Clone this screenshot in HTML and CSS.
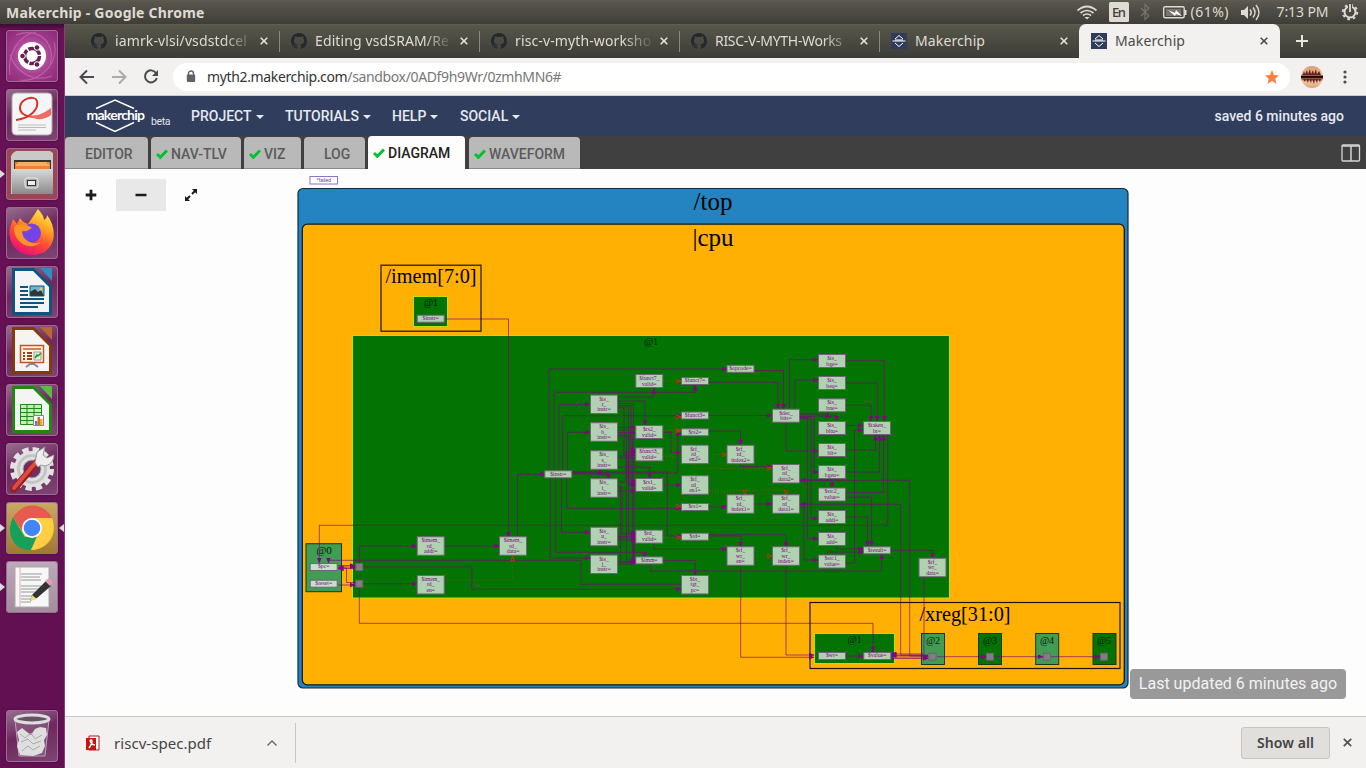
FILE: index.html
```html
<!DOCTYPE html>
<html lang="en">
<head>
<meta charset="utf-8">
<title>Makerchip</title>
<link rel="stylesheet" href="styles.css">
</head>
<body>
<svg width="0" height="0" class="defs">
  <defs>
    <symbol id="octocat" viewBox="0 0 16 16"><path fill="#24292e" d="M8 0C3.58 0 0 3.58 0 8c0 3.54 2.29 6.53 5.47 7.59.4.07.55-.17.55-.38 0-.19-.01-.82-.01-1.49-2.01.37-2.53-.49-2.69-.94-.09-.23-.48-.94-.82-1.13-.28-.15-.68-.52-.01-.53.63-.01 1.08.58 1.23.82.72 1.21 1.87.87 2.33.66.07-.52.28-.87.51-1.07-1.78-.2-3.64-.89-3.64-3.95 0-.87.31-1.59.82-2.15-.08-.2-.36-1.02.08-2.12 0 0 .67-.21 2.2.82a7.6 7.6 0 0 1 4 0c1.53-1.04 2.2-.82 2.2-.82.44 1.1.16 1.92.08 2.12.51.56.82 1.27.82 2.15 0 3.07-1.87 3.75-3.65 3.95.29.25.54.73.54 1.48 0 1.07-.01 1.93-.01 2.2 0 .21.15.46.55.38A8 8 0 0 0 16 8c0-4.42-3.58-8-8-8z"/></symbol>
    <symbol id="chip" viewBox="0 0 16 16"><path fill="#2f3c5c" d="M0 0h16v16H0z"/><path d="M4 6l4-3.500 4 3.500M4 10l4 3.500 4-3.500M1.500 8h13M4 7h8" fill="none" stroke="#fff" stroke-width="1"/></symbol>
    <symbol id="check" viewBox="0 0 12 10"><path d="M1 5l3.300 3.300L11 1.500" fill="none" stroke="#00c22d" stroke-width="3"/></symbol>
    <symbol id="x" viewBox="0 0 8 8"><path d="M.7.7l6.600 6.600M7.300.7L.7 7.300" fill="none" stroke="currentColor" stroke-width="1.600"/></symbol>
    <linearGradient id="fox" x1=".8" y1="0" x2=".3" y2="1"><stop offset="0" stop-color="#fff04a"/><stop offset=".35" stop-color="#ffa023"/><stop offset=".65" stop-color="#ff4636"/><stop offset="1" stop-color="#e80b80"/></linearGradient>
    <linearGradient id="metal" x1="0" y1="0" x2="0" y2="1"><stop offset="0" stop-color="#d8d8d8"/><stop offset="1" stop-color="#8b8b8b"/></linearGradient>
    <linearGradient id="sunset" x1="0" y1="0" x2="0" y2="1"><stop offset="0" stop-color="#d89a73"/><stop offset=".4" stop-color="#f0c6a0"/><stop offset=".5" stop-color="#5a1710"/><stop offset=".7" stop-color="#f3c3a1"/><stop offset="1" stop-color="#dfa474"/></linearGradient>
  </defs>
</svg>

<header class="panel">
  <span class="panel-title">Makerchip - Google Chrome</span>
  <svg class="tray" width="290" height="24" viewBox="1076 0 290 24" fill="none" stroke="#dfdbd2">
    <path d="M1077.500 10.500q9.500-8 19 0M1080.500 13q6.500-5 13 0M1083 15.500q4-3 8 0" stroke-width="1.700"/><path d="M1084.500 17h5l-2.500 2.500z" fill="#dfdbd2" stroke="none"/>
    <rect x="1109" y="2" width="20" height="20" rx="1.500" fill="#dfdbd2" stroke="none"/><text x="1112" y="17" class="lang" textLength="14">En</text>
    <path d="M1141 8l8 8-4 3.500v-15l4 3.500-8 8" stroke="#77756d" stroke-width="1.200"/>
    <rect x="1163.700" y="6.700" width="20.500" height="11" rx="1.500" stroke-width="1.400"/><path d="M1166 9h15v7h-15z" fill="#77756d" stroke="none"/><path d="M1185.500 10v5" stroke-width="2"/><path d="M1168 10l7 3 1-3 6 6-6-2-1 2z" fill="#fff" stroke="none"/>
    <text x="1190.500" y="17" class="tray-text" textLength="38">(61%)</text>
    <path d="M1241 10h3l4-4v13l-4-4h-3z" fill="#dfdbd2" stroke="none"/><path d="M1250 9.500q2.500 3 0 6M1253 7.500q4 5 0 10M1256 5q6 7.500 0 15" stroke-width="1.500"/>
    <text x="1276.500" y="17" class="tray-text" textLength="52">7:13 PM</text>
    <circle cx="1350" cy="12" r="5.500" stroke-width="2"/><circle cx="1350" cy="12" r="7.200" stroke-width="2" stroke-dasharray="2.600 3.055"/><path d="M1350 3v9" stroke="#4c4a44" stroke-width="4"/><path d="M1350 4v8" stroke-width="1.800"/>
  </svg>
</header>

<div class="desk">
<nav class="launcher">
  <div class="tile dash"><svg viewBox="0 0 52 52"><path d="M4 45C1 25 12 5 30 2M48 12C54 32 34 53 14 50M10 5C34-4 52 15 43 38M4 25C10 42 27 53 46 46" fill="none" stroke="#d786c2" stroke-opacity=".5" stroke-width="1.200"/><circle cx="26" cy="26" r="14" fill="#fff"/><circle cx="26" cy="26" r="7.500" fill="none" stroke="#672052" stroke-width="3.500" stroke-dasharray="14.200 1.500"/><g fill="#672052" stroke="#fff"><circle cx="16.500" cy="26" r="2.800"/><circle cx="31" cy="17.500" r="2.800"/><circle cx="31" cy="34.500" r="2.800"/></g></svg></div>
  <div class="tile"><svg viewBox="0 0 52 52"><rect x="6" y="4" width="40" height="42" rx="4" fill="#f5f5f5" stroke="#aaa"/><path d="M10 31C25 29 33 20 31 12 29 6 15 9 14 18c-1 11 18 13 31 5" fill="none" stroke="#d8302b" stroke-width="2"/><path d="M22 26c9 2 16-2 23-7v7c-6 5-15 6-23 0z" fill="#ec6b63"/><path d="M12 36h28M12 38.500h28M12 41h18" stroke="#bbb"/></svg></div>
  <div class="tile files running"><svg viewBox="0 0 52 52"><path d="M7 5l3-2h34l3 2v41H5V8z" fill="#c9c9c9"/><path d="M8 12h37v11H8z" fill="#343434"/><path d="M9 14h35v7H9z" fill="#e88532"/><path d="M10 17h33M12 15h29" stroke="#ffd6a0"/><path d="M6 21h41v25H6z" fill="url(#metal)"/><rect x="19" y="30" width="13" height="10" rx="2" fill="#aaa" stroke="#eee"/><rect x="21.500" y="32.500" width="8" height="5" fill="#eee" stroke="#333"/></svg></div>
  <div class="tile"><svg viewBox="0 0 52 52"><path d="M32 2c3 4 6 7 6 11 2-1 3-3 3-5 13 17 7 40-15 40C6 48 0 28 5 18l2-6 4 5 3-6c2 3 4 5 8 6z" fill="url(#fox)"/><circle cx="25.500" cy="26" r="9.500" fill="#7542e5"/><path d="M8 20c5-4 13-3 18 1-4 2-5 4-10 3 0 9 10 15 19 11-10 10-28 1-27-15z" fill="#ff9427"/></svg></div>
  <div class="tile"><svg viewBox="0 0 52 52"><path d="M6 2h22l18 18v29H6z" fill="#0b5580"/><path d="M9 5h18l16 16v25H9z" fill="#f4f4f4"/><path d="M34 2h12v13z" fill="#2f8fc5"/><path d="M14 21h8M14 25h8M14 29h8M14 33h24M14 37h24M14 41h18" stroke="#0b5580" stroke-width="2"/><path d="M24 20h14v10H24z" fill="#67b8dd"/><path d="M24 30v-4l5-3 3 3 3-2 3 6z" fill="#333"/><circle cx="35" cy="23" r="1.500" fill="#fac939"/><path d="M24 20h14v10H24z" fill="none" stroke="#0b5580"/></svg></div>
  <div class="tile"><svg viewBox="0 0 52 52"><path d="M6 2h22l18 18v29H6z" fill="#843a0d"/><path d="M9 5h18l16 16v25H9z" fill="#f4f4f4"/><path d="M34 2h12v13z" fill="#bd6630"/><path d="M14.500 20.500h23v17h-23z" fill="#fff2e8" stroke="#be581f" stroke-width="1.500"/><path d="M17 24h18" stroke="#d7824b" stroke-width="2"/><path d="M17 28h2m2 0h5m-9 3h2m2 0h5m-9 3h2m2 0h5" stroke="#9b4115" stroke-width="2"/><path d="M28 27h7v8h-7z" fill="#e5f4db" stroke="#999"/><path d="M29 33l2-3 1 1 3-3" stroke="#249532" fill="none" stroke-width="1.500"/><path d="M20 42l4-3h4l4 3" fill="none" stroke="#888" stroke-width="2"/></svg></div>
  <div class="tile"><svg viewBox="0 0 52 52"><path d="M6 2h22l18 18v29H6z" fill="#20870f"/><path d="M9 5h18l16 16v25H9z" fill="#f4f4f4"/><path d="M34 2h12v13z" fill="#58bd3e"/><path d="M14.500 20.500h21v20h-21z" fill="#c4efaf"/><path d="M14.500 20.500h21v20h-21zM14 24.500h21M14 28.500h21M14 32.500h21M14 36.500h21M21 20v20M28 20v20" stroke="#23861a" fill="none"/><path d="M27.500 31.500h10v10h-10z" fill="#fff" stroke="#888"/><path d="M29 37h2.500v4H29z" fill="#3d88d0"/><path d="M31.500 33H34v8h-2.500z" fill="#de6825"/><path d="M34 35h2.500v6H34z" fill="#ebac27"/></svg></div>
  <div class="tile"><svg viewBox="0 0 52 52"><circle cx="26" cy="26" r="13.500" fill="none" stroke="#e2e2e2" stroke-width="9"/><circle cx="26" cy="26" r="19.500" fill="none" stroke="#e2e2e2" stroke-width="5" stroke-dasharray="6.200 4.010"/><circle cx="26" cy="26" r="9" fill="none" stroke="#aaa"/><circle cx="26" cy="26" r="13.500" fill="none" stroke="#c4c4c4" stroke-width="3"/><path d="M8 46l23-27" stroke="#971e1c" stroke-width="7" stroke-linecap="round"/><path d="M8 45l23-27" stroke="#df4a42" stroke-width="4" stroke-linecap="round"/><path d="M29 20l2-11 8-5-2 8 4 3 7-3c0 8-8 13-13 10l-3 2z" fill="#eee" stroke="#999"/></svg></div>
  <div class="tile chrome running focused"><svg viewBox="0 0 52 52"><circle cx="26" cy="26" r="22" fill="#f5c536"/><path d="M7 15C17-1 38 0 46 16H26l-10 13z" fill="#e55b4f"/><path d="M7 15l12 20 12-1-6 14C7 49-1 30 7 15z" fill="#17a05c"/><path d="M26 16h20c5 16-5 31-21 32l10-19z" fill="#ffce43"/><circle cx="26" cy="26" r="10" fill="#fff"/><circle cx="26" cy="26" r="8.300" fill="#4285f4"/></svg></div>
  <div class="tile editor running"><svg viewBox="0 0 52 52"><path d="M9 6h34v40H9z" fill="#f7f7f7" stroke="#aaa"/><path d="M14 6v40" stroke="#e4aeb1"/><path d="M15 13h21M15 16h19M15 19h20M15 25h20M15 28h20M15 31h14M15 35h15M15 38h12M15 41h10" stroke="#999"/><path d="M24 40l2-6 14-14 5 5-14 12z" fill="#333"/><path d="M24 40l2-6 5 4z" fill="#edda79"/><path d="M39 20l4-3 4 4-3 4z" fill="#e49bbb"/></svg></div>
  <div class="tile trash"><svg viewBox="0 0 52 52"><path d="M9 10h34l-4 36H13z" fill="#8d5f86" fill-opacity=".65" stroke="#b9a3b5"/><ellipse cx="26" cy="9" rx="17" ry="4" fill="#665165" stroke="#ddd" stroke-width="3"/><path d="M11 22l5-4 5 4 4 3 4-6 5-2 6 1 1 7-3 5 1 6-3 7-9 3-13-1-3-9 2-6z" fill="#dedede"/><path d="M14 24l5 4 6-5 4 6 7-4M15 32l7-3 5 5 8-3M16 41l6-5 5 4 7-4" stroke="#aaa" fill="none"/></svg></div>
</nav>

<main class="window">
  <div class="tabs">
    <div class="tab"><svg class="fav"><use href="#octocat"/></svg><span class="label fade">iamrk-vlsi/vsdstdcel</span><svg class="close"><use href="#x"/></svg></div>
    <div class="tab"><svg class="fav"><use href="#octocat"/></svg><span class="label fade">Editing vsdSRAM/Re</span><svg class="close"><use href="#x"/></svg></div>
    <div class="tab"><svg class="fav"><use href="#octocat"/></svg><span class="label fade">risc-v-myth-worksho</span><svg class="close"><use href="#x"/></svg></div>
    <div class="tab"><svg class="fav"><use href="#octocat"/></svg><span class="label fade caps">RISC-V-MYTH-Works</span><svg class="close"><use href="#x"/></svg></div>
    <div class="tab last"><svg class="fav"><use href="#chip"/></svg><span class="label">Makerchip</span><svg class="close"><use href="#x"/></svg></div>
    <div class="tab active"><svg class="fav"><use href="#chip"/></svg><span class="label">Makerchip</span><svg class="close"><use href="#x"/></svg></div>
    <svg class="plus" viewBox="0 0 12 12"><path d="M6 0v12M0 6h12" stroke="#e8e6df" stroke-width="2"/></svg>
  </div>
  <div class="toolbar">
    <svg class="history" width="100" height="24" viewBox="76 64 100 24" fill="none" stroke="#4a4b4d" stroke-width="2"><path d="M94 76H81M87 69.500L80.500 76l6.500 6.500"/><path d="M112 76h13M119 69.500l6.500 6.500-6.500 6.500" stroke="#aaa"/><path d="M156 72a6 6 0 1 0 .8 5"/><path d="M158 69v6h-6z" fill="#4a4b4d" stroke="none"/></svg>
    <div class="omnibox">
      <svg width="10" height="13" viewBox="0 0 10 13"><path d="M2.500 6V3.500a2.500 2.500 0 0 1 5 0V6" fill="none" stroke="#5f6368" stroke-width="1.400"/><rect x=".8" y="4.500" width="8.400" height="7.500" rx="1" fill="#5f6368"/></svg>
      <span class="url">myth2.makerchip.com<span>/sandbox/0ADf9h9Wr/0zmhMN6#</span></span>
      <svg class="star" width="16" height="16" viewBox="0 0 16 16"><path d="M8 1l2 5 5 .4-3.800 3.300L12.500 15 8 12l-4.500 3 1.300-5.300L1 6.400 6 6z" fill="#f58142"/></svg>
    </div>
    <svg class="avatar" width="22" height="22" viewBox="0 0 22 22"><circle cx="11" cy="11" r="11" fill="url(#sunset)"/><path d="M2 8l1-3 1 3 2-4 1 4 2-5 1 5 2-4 1 4 2-5 1 5 2-3 2 4H1zM2 13l2 3 1-3 2 4 1-4 2 4 1-4 2 5 1-5 2 4 1-4 2 3 1-3z" fill="#6c2019"/><path d="M0 10.700h22" stroke="#160807" stroke-width="2"/></svg>
    <svg class="dots" width="4" height="14" viewBox="0 0 4 14" fill="#4a4b4d"><circle cx="2" cy="2" r="1.600"/><circle cx="2" cy="7" r="1.600"/><circle cx="2" cy="12" r="1.600"/></svg>
  </div>
  <div class="navbar">
    <svg class="brand" width="100" height="40" viewBox="80 96 100 40"><path d="M96 108.500l19-8.500 19 8.500M96 122.500l19 9 19-9" fill="none" stroke="#fff" stroke-width="1.500"/><text x="86.500" y="120" textLength="58.500" class="brand-name">makerchip</text><text x="151" y="125" textLength="19.500" class="beta">beta</text></svg>
    <span class="menu m1">PROJECT</span><span class="menu m2">TUTORIALS</span><span class="menu m3">HELP</span><span class="menu m4">SOCIAL</span>
    <span class="saved">saved 6 minutes ago</span>
  </div>
  <div class="panes">
    <div class="pane w1">EDITOR</div>
    <div class="pane w2 ok"><svg><use href="#check"/></svg>NAV-TLV</div>
    <div class="pane w3 ok"><svg><use href="#check"/></svg>VIZ</div>
    <div class="pane w4">LOG</div>
    <div class="pane w5 ok current"><svg><use href="#check"/></svg>DIAGRAM</div>
    <div class="pane w6 ok"><svg><use href="#check"/></svg>WAVEFORM</div>
    <svg class="split" width="20" height="18" viewBox="0 0 20 18"><rect x="1" y="1" width="17.500" height="16" rx="1" fill="none" stroke="#d4d4d4" stroke-width="1.300"/><path d="M1 2h17.500M10 2v15" stroke="#d4d4d4" stroke-width="1.500"/></svg>
  </div>
  <section class="view">
    <svg id="diagram" width="1301" height="547" viewBox="65 169 1301 547">
      <defs>
        <marker id="head" viewBox="0 0 6 5" refX="5.500" refY="2.500" markerWidth="6" markerHeight="5" orient="auto" markerUnits="userSpaceOnUse"><path d="M0 0l6 2.500-6 2.500z" fill="#870087"/></marker>
        <marker id="open" viewBox="0 0 6 5" refX="5.500" refY="2.500" markerWidth="6" markerHeight="5" orient="auto" markerUnits="userSpaceOnUse"><path d="M.5.5l5 2-5 2z" fill="none" stroke="#c03800"/></marker>
      </defs>
      <rect x="310" y="176.500" width="27.500" height="7.500" fill="#fff" stroke="#8e74c4"/><text x="324" y="181.500" class="sig failed">*failed</text>
      <rect x="298" y="188.500" width="830" height="499.500" rx="5" fill="#2384c1" stroke="#152b38" stroke-width="1.200"/>
      <rect x="302.300" y="224.200" width="822" height="460.600" rx="5" fill="#ffb003" stroke="#1c1710" stroke-width="1.300"/>
      <text x="713" y="210" class="scope big">/top</text><text x="713" y="246" class="scope big">|cpu</text>
      <g fill="none" stroke="#1d1400" stroke-width="1.200"><rect x="381" y="265.200" width="100" height="66"/><rect x="810" y="602.500" width="310" height="66"/></g>
      <g fill="#037303" stroke="#bfe000"><rect x="413.500" y="296.500" width="34" height="30"/><rect x="352.500" y="335.500" width="597" height="262.500"/><rect x="814.500" y="633.500" width="80" height="30"/></g>
      <g stroke="#183818" fill="#409d53"><rect x="306" y="543.700" width="35.500" height="48"/><rect x="921.500" y="633.500" width="23" height="31"/><rect x="1035.700" y="633.500" width="23" height="31"/><rect x="978.500" y="633.500" width="23" height="31" fill="#037303"/><rect x="1093" y="633.500" width="23" height="31" fill="#037303"/></g>
      <text x="431" y="283" class="scope mid">/imem[7:0]</text><text x="965" y="621" class="scope mid">/xreg[31:0]</text>
      <g class="stage"><text x="431" y="306">@1</text><text x="651" y="345">@1</text><text x="854.500" y="643">@1</text><text x="933" y="644">@2</text><text x="990" y="644">@3</text><text x="1047" y="644">@4</text><text x="1104" y="644">@5</text><text x="324" y="554" class="zero">@0</text></g>
      <g id="edges"></g>
      <g id="nodes"></g>
    </svg>
    <div class="zoombar"><svg viewBox="0 0 12 12"><path d="M6 .7v10.600M.7 6h10.600" stroke="#1b1b1b" stroke-width="2.800"/></svg><svg class="hover" viewBox="0 0 12 12"><path d="M.5 6h11" stroke="#1b1b1b" stroke-width="2.500"/></svg><svg viewBox="0 0 12 12"><path d="M2 10l3-3M7 5l3-3" stroke="#1b1b1b" stroke-width="2"/><path d="M0 12V7l5 5zM12 0v5L7 0z" fill="#1b1b1b"/></svg></div>
    <div class="toast">Last updated 6 minutes ago</div>
  </section>
  <footer class="downloads">
    <svg class="pdf" width="16" height="16" viewBox="0 0 16 16"><path d="M4 1h10v14H4z" fill="#fff" stroke="#b71410"/><rect x="1" y="3" width="10" height="12" fill="#c2160e"/><path d="M4 13c3-4 4-8 2-8s0 5 4 5" fill="none" stroke="#fff" stroke-width="1.400"/></svg>
    <span class="file">riscv-spec.pdf</span>
    <svg class="caret" width="10" height="6" viewBox="0 0 10 6"><path d="M.5 5.500L5 1l4.500 4.500" fill="none" stroke="#666" stroke-width="1.300"/></svg>
    <span class="rule"></span>
    <span class="showall">Show all</span>
    <svg class="shut"><use href="#x"/></svg>
  </footer>
</main>
</div>
<script src="diagram.js"></script>
</body>
</html>
```
FILE: styles.css
```css
* { box-sizing: border-box; }
body { margin: 0; width: 1366px; height: 768px; overflow: hidden; display: flex; flex-direction: column; font-family: "Noto Sans", sans-serif; background: #fdfdfd; }
svg { display: block; flex: none; }
.defs { position: absolute; }
.panel { height: 24px; flex: none; display: flex; align-items: center; justify-content: space-between; padding-left: 6px; background: linear-gradient(#63604f 0, #59574f 1px, #3e3d37 24px); color: #dfdbd2; }
.panel-title { font-size: 14px; font-weight: 700; letter-spacing: .22px; }
.lang { font: 500 13px "Noto Sans", sans-serif; fill: #3c3b37; stroke: none; }
.tray-text { font-size: 14px; fill: #dfdbd2; stroke: none; }
.desk { flex: 1; display: flex; min-height: 0; }
.launcher { width: 65px; flex: none; display: flex; flex-direction: column; align-items: center; gap: 7px; padding: 6px 1px 6px 0; background: linear-gradient(#3d0b34, #681157 6px, #621052); border-right: 1px solid #864278; }
.tile { position: relative; width: 52px; height: 52px; flex: none; border-radius: 4px; background: linear-gradient(160deg, #997090, #6e285f 45%, #7f4675); box-shadow: inset 0 0 0 1px #9a6d91, 0 0 2px #3c0831; }
.dash { background: radial-gradient(#dd82c8, #a13c8c 55%, #8c2676); }
.files { background: #9b4657; }
.chrome { background: linear-gradient(#c8aa64, #9f782e); }
.editor { background: linear-gradient(#bda9b9, #a28d9e); }
.trash { margin-top: 90px; }
.running::before { content: ""; position: absolute; left: -6px; top: 22px; border: 4px solid transparent; border-left: 5px solid #ddd; border-right: 0; }
.focused::after { content: ""; position: absolute; right: -6px; top: 22px; border: 4px solid transparent; border-right: 5px solid #ddd; border-left: 0; }
.window { width: 1301px; display: flex; flex-direction: column; }
.tabs { height: 34px; flex: none; display: flex; padding-left: 14px; background: linear-gradient(#66644f 0, #57584b 1px, #3c3b37); color: #dfdbd2; }
.tab { width: 200px; display: flex; align-items: center; padding: 0 11px 0 12px; position: relative; }
.tab::after { content: ""; position: absolute; right: -1px; top: 7px; width: 1px; height: 21px; background: #89877e; }
.tab.last::after, .tab.active::after { display: none; }
.fav { width: 16px; height: 16px; margin-right: 8px; }
.label { width: 139px; height: 20px; line-height: 20px; font-size: 14px; letter-spacing: .12px; white-space: nowrap; margin-right: 6px; }
.fade { -webkit-mask-image: linear-gradient(90deg, #000 108px, transparent 140px); mask-image: linear-gradient(90deg, #000 108px, transparent 140px); }
.caps { letter-spacing: -.3px; }
.close { width: 8px; height: 8px; color: #e6e3dc; }
.active { width: 201px; background: #f2f1f0; border-radius: 7px 7px 0 0; color: #4c4b48; }
.active .close { color: #4c4b48; }
.plus { width: 12px; height: 12px; margin: 11px 0 0 16px; }
.toolbar { height: 38px; flex: none; display: flex; align-items: center; background: #f2f1f0; border-bottom: 1px solid #cdccca; }
.history { margin-left: 11px; margin-right: -3px; }
.omnibox { width: 1117px; height: 28px; border-radius: 14px; display: flex; align-items: center; padding: 0 10px 0 13px; background: #fff; }
.url { margin-left: 11px; font-size: 14px; letter-spacing: -.36px; color: #333; }
.url span { color: #777; }
.star { margin-left: auto; }
.avatar { margin-left: 11px; }
.dots { margin-left: 20px; }
.navbar { height: 40px; flex: none; display: flex; align-items: center; padding: 0 22px 0 15px; background: #303d5c; color: #e6e9f0; font: 500 14px Roboto, sans-serif; }
.brand-name { font: 700 14px Lato, sans-serif; fill: #fff; }
.beta { font: 10.5px Roboto, sans-serif; fill: #e0e3eb; }
.menu { display: flex; align-items: center; margin-left: 11px; }
.menu::after { content: ""; margin: 2px 0 0 4px; border: 4px solid transparent; border-top-color: #e6e9f0; border-bottom: 0; }
.m1 { width: 83px; } .m2 { width: 96px; } .m3 { width: 57px; }
.saved { margin-left: auto; }
.panes { height: 33px; flex: none; display: flex; align-items: flex-end; background: #404040; font: 500 14px Roboto, sans-serif; }
.pane { height: 32px; display: flex; align-items: center; padding: 2px 0 0 20px; margin-right: 3px; color: #5b5b5b; background: #b9b9b9; border-radius: 4px 4px 0 0; border-bottom: 1.500px solid #8a8a8a; }
.pane svg { width: 12px; height: 10px; margin-right: 3px; }
.ok { padding-left: 5px; }
.w1 { width: 83px; } .w2 { width: 90px; } .w3 { width: 57px; } .w4 { width: 61px; } .w5 { width: 97px; } .w6 { width: 111px; }
.current { height: 33px; padding-top: 0; background: #fdfdfd; color: #222; border: 0; margin-right: 4px; }
.split { margin: 0 5px 7px auto; }
.view { flex: 1; position: relative; min-height: 0; background: #fdfdfd; }
.scope { font-family: "Liberation Serif", serif; text-anchor: middle; }
.big { font-size: 25px; } .mid { font-size: 20.3px; }
.stage { font: 10px "Liberation Serif", serif; text-anchor: middle; fill: #06190a; }
.zero { font-size: 11px; }
.sig { font: 5.7px "Liberation Serif", serif; text-anchor: middle; fill: #820082; }
.failed { fill: #6237a8; font-size: 5.2px; font-family: "Liberation Sans", sans-serif; }
.box { fill: #b1d2b2; stroke: #75617a; stroke-width: 1; }
.light { fill: #c6e0c9; }
.port { fill: #808080; stroke: #706074; }
.wire { fill: none; stroke: #800080; stroke-opacity: .65; marker-end: url(#head); }
.when { fill: none; stroke: #b85000; stroke-opacity: .5; stroke-dasharray: 1 2; marker-end: url(#open); }
.zoombar { position: absolute; left: 1px; top: 10px; display: flex; }
.zoombar svg { width: 50px; height: 32px; padding: 10px 19px; }
.zoombar .hover { background: #e8e8e8; }
.toast { position: absolute; left: 1065px; top: 500px; width: 216px; height: 30px; line-height: 30px; text-align: center; border-radius: 4px; background: #999; color: #f2f2f2; font-size: 16px; font-family: Roboto, sans-serif; }
.downloads { height: 52px; flex: none; display: flex; align-items: center; background: #f2f1f0; border-top: 1px solid #cbcac9; color: #444; }
.pdf { margin-left: 20px; }
.file { margin-left: 13px; width: 98px; font-size: 15px; letter-spacing: .05px; white-space: nowrap; }
.caret { margin-left: 55px; }
.rule { width: 1px; height: 40px; margin-left: 18px; background: #c8c7c6; }
.showall { width: 89px; height: 32px; margin-left: auto; border: 1px solid #c7c5c2; border-radius: 3px; background: #e1dfdc; text-align: center; line-height: 29px; font-size: 14px; font-weight: 600; letter-spacing: .1px; }
.shut { width: 9px; height: 9px; margin: 0 14px 0 13px; color: #555; }
```
FILE: diagram.js
```js
const NS = "http://www.w3.org/2000/svg";
function add(parent, tag, attrs, text) {
  const el = document.createElementNS(NS, tag);
  for (const k in attrs) el.setAttribute(k, attrs[k]);
  if (text) el.textContent = text;
  document.getElementById(parent).appendChild(el);
}

// Centre x, centre y, label lines separated by spaces.
const nodes = [
  [430.7, 318.7, "$instr="], [323.7, 567, "$pc="], [323.7, 583.7, "$reset="],
  [430.7, 546, "$imem_ rd_ addr="], [430.7, 584.7, "$imem_ rd_ en="], [513, 546, "$imem_ rd_ data="],
  [558.3, 474.3, "$instr="],
  [604, 404.3, "$is_ r_ instr="], [604, 432, "$is_ b_ instr="], [604, 460, "$is_ s_ instr="],
  [604, 488, "$is_ i_ instr="], [604, 536.5, "$is_ u_ instr="], [604, 564.3, "$is_ j_ instr="],
  [649.3, 381, "$funct7_ valid="], [649.3, 432, "$rs2_ valid="], [649.3, 454.4, "$funct3_ valid="],
  [649.3, 485, "$rs1_ valid="], [649.3, 536.6, "$rd_ valid="], [649.3, 560.4, "$imm="],
  [695, 381, "$funct7="], [695, 415.5, "$funct3="], [695, 432.3, "$rs2="], [695, 454.4, "$rf_ rd_ en2="],
  [695, 485, "$rf_ rd_ en1="], [695, 507, "$rs1="], [695, 536.7, "$rd="], [695, 584.7, "$br_ tgt_ pc="],
  [740.5, 368.8, "$opcode="], [740.5, 454.5, "$rf_ rd_ index2="], [740.5, 504, "$rf_ rd_ index1="], [740.5, 556, "$rf_ wr_ en="],
  [786, 415.7, "$dec_ bits="], [786, 473.7, "$rf_ rd_ data2="], [786, 504, "$rf_ rd_ data1="], [786, 556, "$rf_ wr_ index="],
  [832, 361, "$is_ bge="], [832, 383, "$is_ beq="], [832, 405.3, "$is_ bne="], [832, 428, "$is_ bltu="],
  [832, 450, "$is_ blt="], [832, 472, "$is_ bgeu="], [832, 494.5, "$src2_ value="], [832, 517, "$is_ addi="],
  [832, 539, "$is_ add="], [832, 561.5, "$src1_ value="],
  [877, 428, "$taken_ br="], [877, 550.3, "$result="], [932.5, 567.5, "$rf_ wr_ data="],
  [832, 656, "$wr="], [877.3, 656, "$value="]
];

const wires = [
  "M445 319H508.500V537", "M517.500 537V474.300H545", "M887.700 435V525.300H319.300V563", "M681 584.300H581V560.300H328.500V563",
  "M338 565.500H355", "M355 568.500H338", "M338 567H355", "M363 567H471.700V589.300H681", "M338 585H355", "M355 582.500H346.500V568H338",
  "M359.300 563V546H417", "M363 583.700H417", "M359.300 588V623.300H873V652", "M445 546H499",
  "M549 471V369H727", "M554 471V392.300H695V385", "M558.700 471V404.500H590", "M562.700 471V415.700H681", "M567.500 471V432.300H590",
  "M550.300 478V558H590", "M555.700 478V552.300H644.700V557", "M561.500 478V532.300H590", "M566.700 478V508.300H681",
  "M572 472H600V469", "M572 474H608.500V479", "M572 473H677.700V434H681", "M572 472H667.300V536H681",
  "M618 397H654V388", "M618 401H645V425", "M618 403.500H633.500V450H636", "M618 405.500H631V481H636", "M618 407H628.500V533H636", "M618 408H624V455H636",
  "M618 427.500H636", "M618 430H629V485H636", "M618 432.500H636", "M618 435H626.500V560H636", "M618 437H632.500V561.500H636",
  "M618 456H628V484H636", "M618 458H634V562H636", "M618 467H649.700V478",
  "M618 482H626V452H636", "M618 486H620.500V562H636", "M618 488H622V534H636", "M618 491H636",
  "M618 536.500H636", "M618 538H634V560H636", "M618 540H636", "M618 562H636", "M618 564H634V540H636",
  "M663 432.300H671V452.500H681", "M709 382.300H778V409", "M754 370.500H783.500V409", "M709 415.500H772", "M709 431H740.500V445",
  "M789.500 409V359.700H818", "M795 409V380H818", "M786 422V451H818", "M800 414H827.500V412", "M800 416H836.500V421",
  "M800 417.500H807.500V538.700H818", "M800 418.500H811V518.500H818", "M800 416.500H814V472H818",
  "M846 360.700H884.300V421", "M846 383H877.300V421", "M846 405.300H871V421", "M846 425.500H863", "M846 450H875.500V435",
  "M846 472H879.500V435", "M846 492.500H883.500V435", "M846 563H854.500V430H863", "M846 497H871.500V546", "M846 517H867.500V546",
  "M836.500 545V549H863", "M827.500 555V552H863", "M891 550.300H932.500V558", "M650 564V571H881.700V554", "M800 480H832V488",
  "M928 656H909.700V480.300H800", "M928 655H900.700V504.300H800", "M800 507H804V560H818",
  "M740.700 565V657.300H814", "M786 565V655H814", "M709 536H740.700V547", "M709 534.700H786V547", "M740.500 464V466.500H772",
  "M663 485H681", "M709 507H727", "M754 504H772", "M654 543V549.300H727", "M663 560.500H695V575", "M846 656H863",
  "M924 577V654H891", "M891 657H928", "M928 655.500H891", "M891 658.500H928", "M937 656.700H986", "M994 656.700H1043", "M1051 656.700H1100"
];

const conditions = [
  "M447 580H512.700V556", "M663 381H681", "M663 456.500H675V417H681", "M663 430.500H681", "M709 454.500H727", "M694.500 464V468.500H772",
  "M663 485H672V434H675V430.500H681", "M649.500 492V506H681", "M709 490H745V495", "M709 492H735V490.500H786V495", "M663 537.500H681", "M754 556H772"
];

wires.forEach(d => add("edges", "path", { class: "wire", d }));
conditions.forEach(d => add("edges", "path", { class: "when", d }));

const heights = [7, 13, 18.5];
const baselines = [[1.2], [-1.2, 4.5], [-3.8, 1.7, 7]];
nodes.forEach(([x, y, label]) => {
  const lines = label.split(" ");
  const n = lines.length - 1;
  const h = heights[n];
  add("nodes", "rect", { class: x < 330 ? "box light" : "box", x: x - 13.5, y: y - h / 2, width: 27, height: h });
  lines.forEach((t, i) => add("nodes", "text", { class: "sig", x: x, y: y + baselines[n][i] }, t));
});

[[359.3, 567], [359.3, 583.7], [932.5, 656.7], [990, 656.7], [1047, 656.7], [1104, 656.7]].forEach(([x, y]) =>
  add("nodes", "rect", { class: "port", x: x - 3.5, y: y - 3.5, width: 7, height: 7 }));
```
